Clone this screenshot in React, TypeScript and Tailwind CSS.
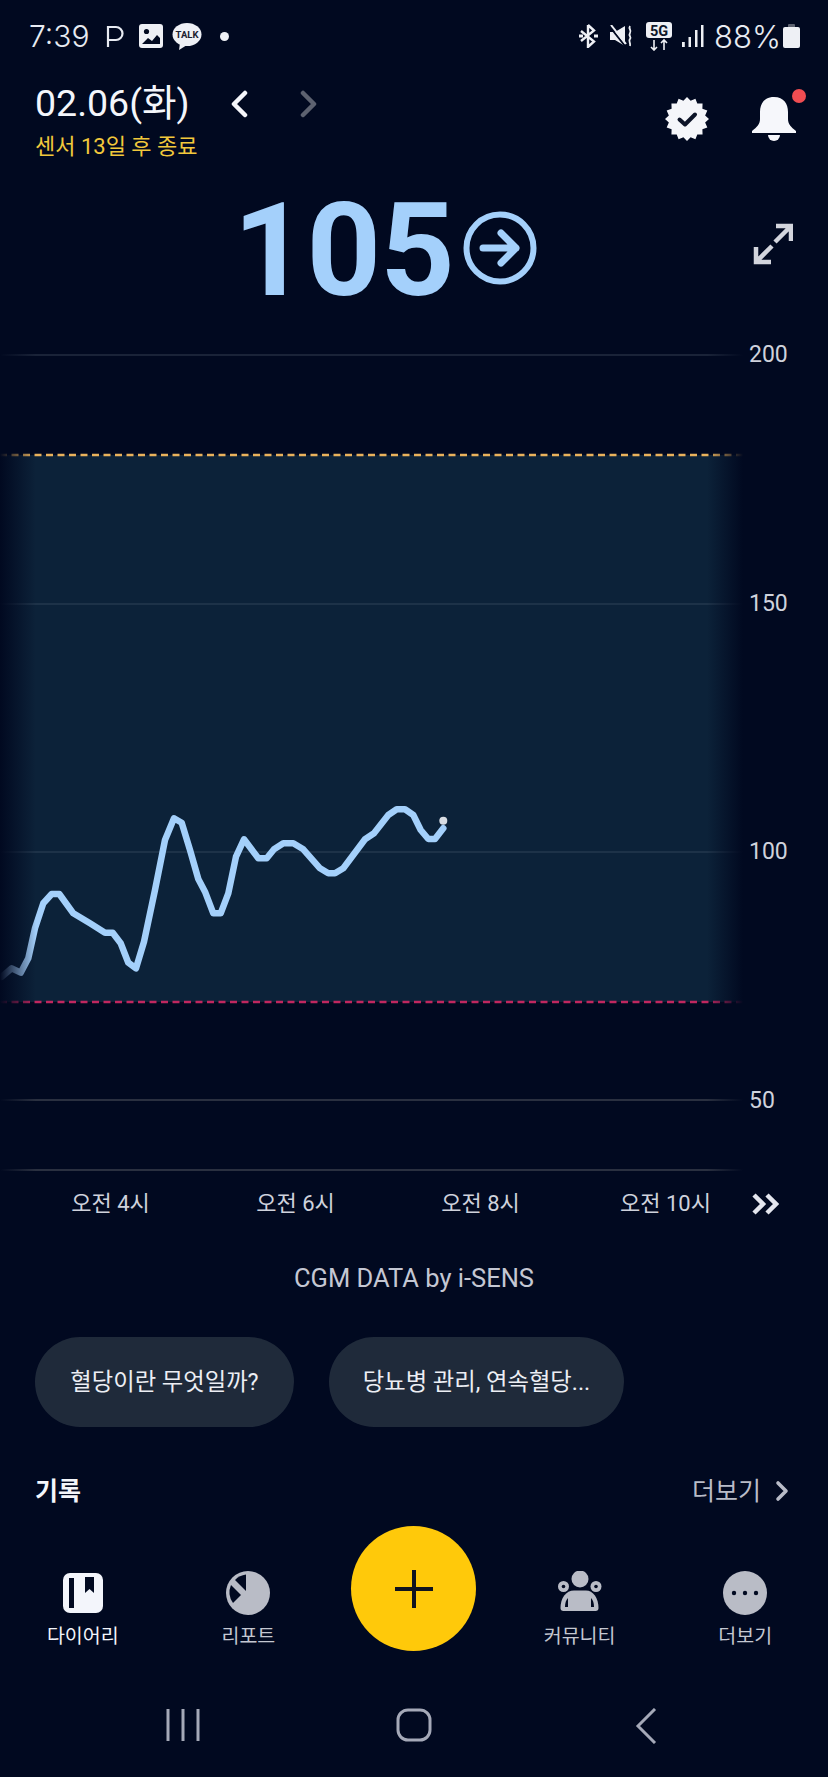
const BG = "#010920";

const curve: [number, number][] = [
  [5,590],[35,565],[62,578],[85,535],[105,445],[130,370],[155,342],[178,342],[220,400],[270,430],[315,458],[338,458],[362,490],[385,548],[408,565],[432,485],[465,330],[495,180],[522,115],[545,128],[570,210],[595,297],[615,335],[640,400],[662,400],[685,340],[708,230],[732,178],[775,235],[800,235],[822,208],[850,190],[880,190],[910,208],[960,265],[985,280],[1005,280],[1030,265],[1095,178],[1122,160],[1165,105],[1190,88],[1215,88],[1240,105],[1262,150],[1285,177],[1305,177],[1330,145],
];
const curvePoints = curve.map(([x, y]) => `${(x / 3).toFixed(1)},${(y / 3 + 440).toFixed(1)}`).join(" ");

const badgePoints = Array.from({ length: 32 }, (_, i) => {
  const r = i % 2 === 0 ? 22 : 18.5;
  const a = (i / 32) * Math.PI * 2 - Math.PI / 2;
  return `${(22 + r * Math.cos(a)).toFixed(2)},${(22 + r * Math.sin(a)).toFixed(2)}`;
}).join(" ");

function Chart() {
  return (
    <svg width="745" height="840" viewBox="0 0 745 840" className="block shrink-0">
      <defs>
        <linearGradient id="fadeL" x1="0" x2="1" y1="0" y2="0">
          <stop offset="0" stopColor={BG} stopOpacity="1" />
          <stop offset="1" stopColor={BG} stopOpacity="0" />
        </linearGradient>
        <linearGradient id="fadeR" x1="0" x2="1" y1="0" y2="0">
          <stop offset="0" stopColor={BG} stopOpacity="0" />
          <stop offset="1" stopColor={BG} stopOpacity="1" />
        </linearGradient>
      </defs>
      <rect x="0" y="115" width="745" height="547" fill="#0c2239" />
      <line x1="0" x2="745" y1="15" y2="15" stroke="#1a2338" strokeWidth="2" />
      <line x1="0" x2="745" y1="264" y2="264" stroke="#1d3248" strokeWidth="2" />
      <line x1="0" x2="745" y1="512" y2="512" stroke="#1d3248" strokeWidth="2" />
      <line x1="0" x2="745" y1="760" y2="760" stroke="#2a3040" strokeWidth="2" />
      <line x1="0" x2="745" y1="830" y2="830" stroke="#2a3040" strokeWidth="2" />
      <line x1="0" x2="745" y1="115" y2="115" stroke="#e9b25c" strokeWidth="2.6" strokeDasharray="7 4.5" />
      <line x1="0" x2="745" y1="662" y2="662" stroke="#c0275f" strokeWidth="2.6" strokeDasharray="7 4.5" />
      <polyline points={curvePoints} fill="none" stroke="#a4d0fb" strokeWidth="6.5" strokeLinejoin="round" strokeLinecap="round" />
      <circle cx="443.3" cy="480.7" r="4" fill="#d9dde3" />
      <rect x="0" y="0" width="36" height="840" fill="url(#fadeL)" />
      <rect x="707" y="0" width="36" height="840" fill="url(#fadeR)" />
      <rect x="743" y="0" width="2" height="840" fill={BG} />
    </svg>
  );
}

function StatusLeft() {
  return (
    <div className="flex items-center">
      <span className="font-['Inter',sans-serif] font-light text-[30px] leading-none text-[#e8ebf2] w-[77px]">7:39</span>
      <svg width="18" height="22" viewBox="0 0 18 22" className="shrink-0">
        <path d="M2 22V2h8a5.500 5.500 0 0 1 0 13H2" fill="none" stroke="#e8ebf2" strokeWidth="2.2" />
      </svg>
      <svg width="24" height="24" viewBox="0 0 24 24" className="ml-[15px] shrink-0">
        <rect width="24" height="24" rx="3" fill="#eef0f5" />
        <path d="M3 20l6-6 4 3 5-6 3 3v6H3z" fill={BG} />
        <circle cx="7.500" cy="7.500" r="2.600" fill={BG} />
      </svg>
      <svg width="30" height="27" viewBox="0 0 30 27" className="ml-[9px] shrink-0">
        <ellipse cx="15" cy="11.500" rx="14.500" ry="11.500" fill="#eef0f5" />
        <path d="M8 20l-1 7 8-5z" fill="#eef0f5" />
        <text x="15" y="15" textAnchor="middle" fontFamily="Roboto, sans-serif" fontWeight="700" fontSize="9.500" fill="#1a2030">TALK</text>
      </svg>
      <span className="ml-[18px] w-[9px] h-[9px] rounded-full bg-[#eef0f5]" />
    </div>
  );
}

function StatusRight() {
  return (
    <div className="flex items-center">
      <svg width="21" height="24" viewBox="0 0 21 24" className="shrink-0" fill="none" stroke="#eef0f5" strokeWidth="2.400">
        <path d="M10 1v22l6-5.500L3 7M10 1l6 5.500L3 17" />
        <path d="M1 12h4M16 12h4" strokeWidth="3" />
      </svg>
      <svg width="24" height="22" viewBox="0 0 24 22" className="ml-[11px] shrink-0">
        <path d="M0 7h5l10-6v20L5 15H0z" fill="#eef0f5" />
        <path d="M0 2l15 19" stroke={BG} strokeWidth="2" />
        <path d="M1 0l15 19" stroke="#eef0f5" strokeWidth="2" />
        <path d="M20 1c-2 3 2 4 0 7s2 4 0 6 1 4 0 7" fill="none" stroke="#eef0f5" strokeWidth="1.800" />
      </svg>
      <svg width="26" height="29" viewBox="0 0 26 29" className="ml-[12px] shrink-0">
        <rect x="0" y="0" width="26" height="16" rx="3" fill="#eef0f5" />
        <text x="13" y="13.500" textAnchor="middle" fontFamily="Roboto, sans-serif" fontWeight="700" fontSize="14.500" fill="#10182a">5G</text>
        <path d="M8 18v10M5 25l3 3 3-3M18 28V18M15 21l3-3 3 3" fill="none" stroke="#eef0f5" strokeWidth="1.600" />
      </svg>
      <svg width="22" height="22" viewBox="0 0 22 22" className="ml-[10px] shrink-0" fill="#eef0f5">
        <rect x="0" y="17" width="2.800" height="5" />
        <rect x="6.500" y="12" width="2.500" height="10" />
        <rect x="13" y="5" width="2.500" height="17" />
        <rect x="19" y="0" width="2.500" height="22" />
      </svg>
      <span className="ml-[10px] font-['Inter',sans-serif] font-light text-[31px] leading-none text-[#e8ebf2] w-[67px]">88%</span>
      <svg width="17" height="24" viewBox="0 0 17 24" className="ml-[2px] shrink-0">
        <rect x="5" y="0" width="7" height="4" rx="1" fill="#5d6270" />
        <rect x="0" y="3" width="17" height="21" rx="2" fill="#eef0f5" />
      </svg>
    </div>
  );
}

function Header() {
  return (
    <div className="h-[96px] pl-[35px] pr-[32px] flex justify-between">
      <div className="flex flex-col">
        <div className="flex items-center h-[63px]">
          <span className="text-[37.5px] leading-none text-[#f4f6fb] w-[192px]">02.06(화)</span>
          <svg width="18" height="28" viewBox="0 0 18 28" className="ml-[3px]" fill="none" stroke="#f5f6fa" strokeWidth="4.500" strokeLinecap="round" strokeLinejoin="round">
            <path d="M15 3L4 14l11 11" />
          </svg>
          <svg width="18" height="28" viewBox="0 0 18 28" className="ml-[52px]" fill="none" stroke="#5d6270" strokeWidth="4.500" strokeLinecap="round" strokeLinejoin="round">
            <path d="M3 3l11 11L3 25" />
          </svg>
        </div>
        <span className="text-[22px] leading-[24px] text-[#f2c83c]">센서 13일 후 종료</span>
      </div>
      <div className="flex items-start pt-[25px]">
        <svg width="44" height="44" viewBox="0 0 44 44" className="shrink-0">
          <polygon points={badgePoints} fill="#f5f6fa" />
          <path d="M14.500 22.500l5.500 5 10-10" fill="none" stroke="#0d1428" strokeWidth="4" strokeLinecap="round" strokeLinejoin="round" />
        </svg>
        <div className="relative ml-[43px] w-[44px] h-[44px]">
          <svg width="44" height="44" viewBox="0 0 44 44">
            <path d="M22 0C12 0 8 7 8 15v7c0 5-3 8-8 12v2h44v-2c-5-4-8-7-8-12v-7C36 7 32 0 22 0z" fill="#f6f7fb" />
            <path d="M16 38h12a6 6 0 0 1-12 0z" fill="#f6f7fb" />
          </svg>
          <span className="absolute -top-[8px] -right-[10px] w-[14px] h-[14px] rounded-full bg-[#f04d52]" />
        </div>
      </div>
    </div>
  );
}

function Reading() {
  return (
    <div className="h-[172px] pl-[233px] pr-[35px] flex items-start">
      <span className="text-[130px] tracking-[-1px] font-bold leading-none text-[#a4d0fb] mt-[18px]">105</span>
      <svg width="74" height="74" viewBox="0 0 74 74" className="ml-[9px] mt-[43px] shrink-0" fill="none" stroke="#a4d0fb">
        <circle cx="37" cy="37" r="33.500" strokeWidth="6" />
        <path d="M20 37h33M38 22l15 15-15 15" strokeWidth="7" strokeLinecap="round" strokeLinejoin="round" />
      </svg>
      <svg width="40" height="42" viewBox="0 0 40 42" className="ml-auto mt-[55px] shrink-0" fill="none" stroke="#d3d5dd" strokeWidth="4.500">
        <path d="M23 3h15v15M37 4L22 19M3 24v15h15M4 38l15-15" />
      </svg>
    </div>
  );
}

function AxisRow() {
  const labels = ["오전 4시", "오전 6시", "오전 8시", "오전 10시"];
  return (
    <div className="h-[46px] pl-[18px] pt-[2px] flex items-center">
      {labels.map((l) => (
        <span key={l} className="w-[185px] text-center text-[22px] leading-none text-[#cfd2dc] shrink-0">{l}</span>
      ))}
      <svg width="27" height="22" viewBox="0 0 27 22" className="-ml-[6px] shrink-0" fill="none" stroke="#e4e6ee" strokeWidth="4.500">
        <path d="M2 2l9 9-9 9M15 2l9 9-9 9" />
      </svg>
    </div>
  );
}

function Chips() {
  return (
    <div className="flex gap-[35px] pl-[35px] mt-[39px]">
      <div className="h-[90px] w-[259px] rounded-full bg-[#1f2a3a] flex items-center justify-center text-[23.3px] text-[#eceef4]">혈당이란 무엇일까?</div>
      <div className="h-[90px] w-[295px] rounded-full bg-[#1f2a3a] flex items-center justify-center text-[23.3px] text-[#eceef4]">당뇨병 관리, 연속혈당...</div>
    </div>
  );
}

function Records() {
  return (
    <div className="mt-[46px] h-[36px] pl-[35px] pr-[38px] flex items-center justify-between">
      <span className="text-[25px] font-bold leading-none text-[#f4f6fb]">기록</span>
      <div className="flex items-center">
        <span className="text-[25px] leading-none text-[#b9bcc8]">더보기</span>
        <svg width="15" height="22" viewBox="0 0 15 22" className="ml-[14px]" fill="none" stroke="#b9bcc8" strokeWidth="3.600" strokeLinecap="round" strokeLinejoin="round">
          <path d="M3 3l8 8-8 8" />
        </svg>
      </div>
    </div>
  );
}

function NavItem({ label, active, children }: { label: string; active?: boolean; children: React.ReactNode }) {
  return (
    <div className="flex flex-col items-center">
      <div className="h-[44px] w-[44px] mt-[60px]">{children}</div>
      <span className={`mt-[8px] text-[19.5px] leading-[28px] ${active ? "text-[#f2f4fa]" : "text-[#c4c7d1]"}`}>{label}</span>
    </div>
  );
}

function BottomNav() {
  return (
    <div className="mt-[2px] grid grid-cols-5 h-[153px]">
      <NavItem label="다이어리" active>
        <svg width="44" height="44" viewBox="0 0 44 44">
          <rect x="2" y="2" width="40" height="40" rx="7" fill="#f3f5fb" />
          <rect x="8" y="7" width="5" height="30" fill={BG} />
          <path d="M24 6h9v16l-4.500-4-4.500 4z" fill={BG} />
        </svg>
      </NavItem>
      <NavItem label="리포트">
        <svg width="44" height="44" viewBox="0 0 44 44">
          <circle cx="22" cy="22" r="22" fill="#b9bcc6" />
          <path d="M9 9A18.500 18.500 0 0 1 20 3.600V20z" fill={BG} />
          <path d="M5 14l10 10-8 8A18.500 18.500 0 0 1 5 14z" fill={BG} />
        </svg>
      </NavItem>
      <div className="flex justify-center items-start pt-[15px]">
        <div className="w-[125px] h-[125px] rounded-full bg-[#ffc90a] flex items-center justify-center shrink-0">
          <svg width="40" height="40" viewBox="0 0 40 40" fill="none" stroke="#10131f" strokeWidth="4">
            <path d="M20 1v38M1 20h38" />
          </svg>
        </div>
      </div>
      <NavItem label="커뮤니티">
        <svg width="44" height="44" viewBox="0 0 44 44" fill="#b9bcc6">
          <circle cx="22" cy="8" r="8.500" />
          <circle cx="5.500" cy="15.500" r="5.500" />
          <circle cx="38" cy="15.500" r="5.500" />
          <circle cx="5.500" cy="15.500" r="1.800" fill={BG} />
          <circle cx="38" cy="15.500" r="1.800" fill={BG} />
          <path d="M2.500 37C2.500 27 8 19.500 16 19.500h12c7 0 12.500 7.500 12.500 17.500a3 3 0 0 1-3 3H5.500a3 3 0 0 1-3-3z" />
          <path d="M7 36c0-4 1-7 3-9v9zM36 36c0-4-1-7-3-9v9z" fill={BG} />
        </svg>
      </NavItem>
      <NavItem label="더보기">
        <svg width="44" height="44" viewBox="0 0 44 44">
          <circle cx="22" cy="22" r="22" fill="#b9bcc6" />
          <circle cx="11" cy="22" r="2.200" fill={BG} />
          <circle cx="22" cy="22" r="2.200" fill={BG} />
          <circle cx="33" cy="22" r="2.200" fill={BG} />
        </svg>
      </NavItem>
    </div>
  );
}

function SystemNav() {
  return (
    <div className="flex-1 flex justify-center pt-[44px]">
      <div className="w-[232px] flex justify-center">
        <svg width="34" height="34" viewBox="0 0 34 34" className="ml-[2px]" stroke="#a5a9b8" strokeWidth="3">
          <path d="M2 1v32M17 1v32M32 1v32" />
        </svg>
      </div>
      <div className="w-[232px] flex justify-center">
        <svg width="36" height="34" viewBox="0 0 36 34" fill="none" stroke="#a5a9b8" strokeWidth="3">
          <rect x="2" y="2" width="32" height="30" rx="10" />
        </svg>
      </div>
      <div className="w-[232px] flex justify-center">
        <svg width="22" height="36" viewBox="0 0 22 36" fill="none" stroke="#a5a9b8" strokeWidth="3">
          <path d="M20 1L3 18l17 17" />
        </svg>
      </div>
    </div>
  );
}

export default function App() {
  return (
    <div className="w-[828px] h-[1777px] overflow-hidden flex flex-col bg-[#010920] font-['Roboto','Noto_Sans_CJK_KR',sans-serif]">
      <div className="h-[72px] shrink-0 pl-[29px] pr-[28px] flex items-center justify-between">
        <StatusLeft />
        <StatusRight />
      </div>
      <Header />
      <Reading />
      <div className="flex h-[840px] shrink-0">
        <Chart />
        <div className="flex flex-col justify-between pb-[64px] pl-[4px] text-[23px] leading-[30px] text-[#cfd2dc]">
          <span>200</span>
          <span>150</span>
          <span>100</span>
          <span>50</span>
        </div>
      </div>
      <AxisRow />
      <div className="h-[40px] mt-[32px] text-center text-[25.5px] leading-[40px] text-[#c4c7d3]">CGM DATA by i-SENS</div>
      <Chips />
      <Records />
      <BottomNav />
      <SystemNav />
    </div>
  );
}
